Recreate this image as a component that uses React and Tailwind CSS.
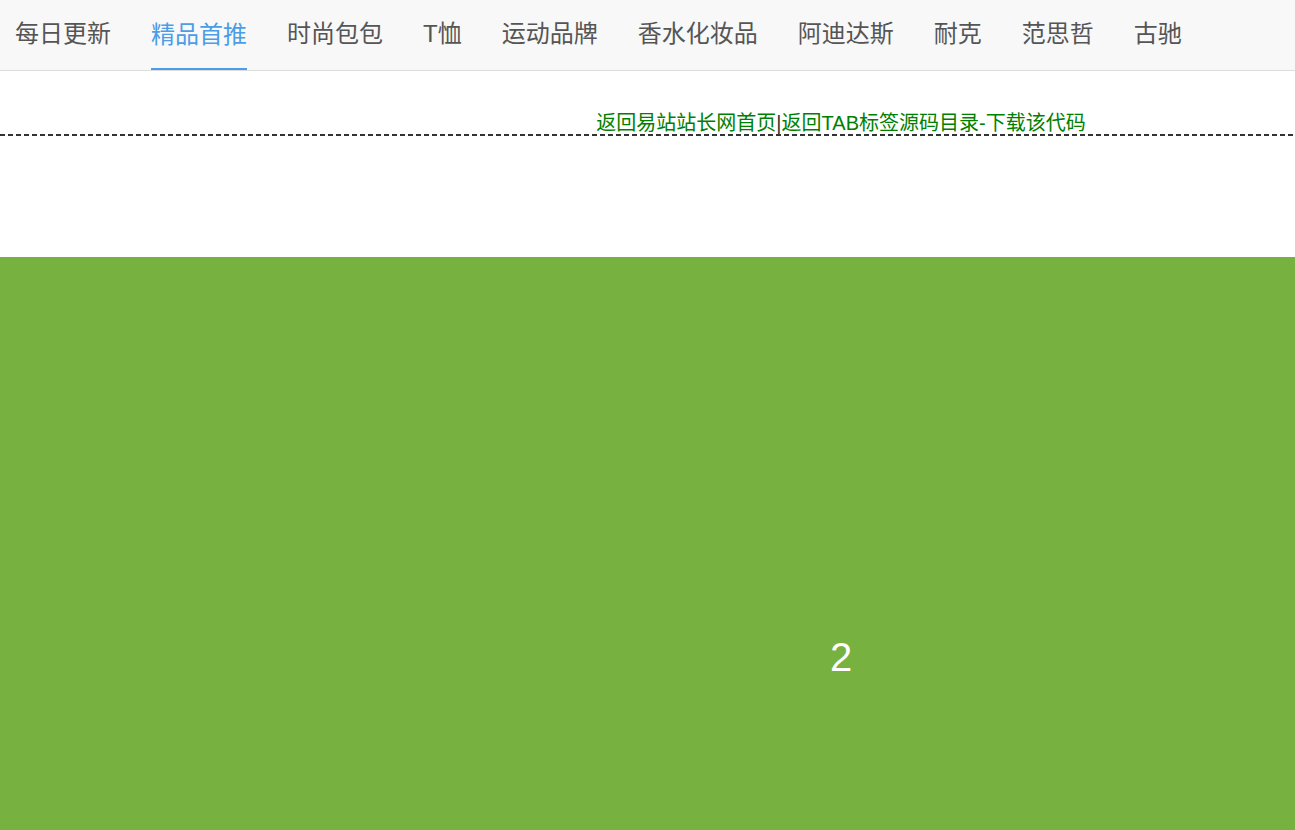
export default function App() {
  const tabs = ["每日更新", "精品首推", "时尚包包", "T恤", "运动品牌", "香水化妆品", "阿迪达斯", "耐克", "范思哲", "古驰"];
  const font = { fontFamily: '"Liberation Sans", "Noto Sans CJK SC", sans-serif' };
  return (
    <div className="h-[830px] w-[1295px] overflow-hidden bg-white" style={font}>
      <div className="box-border flex h-[71px] gap-[40px] border-b border-[#dddddd] bg-[#f8f8f8] pl-[15px]">
        {tabs.map((t, i) => (
          <div
            key={t}
            className={
              i === 1
                ? "box-border flex h-[70px] items-center border-b-2 border-[#4a9de6] pt-[2px] text-[24px] text-[#4a9de6]"
                : "box-border flex h-[70px] items-center pb-[2px] text-[24px] text-[#555555]"
            }
          >
            {t}
          </div>
        ))}
      </div>
      <div className="w-[1682px]">
        <div className="flex h-[63px] items-end justify-center text-[20px] leading-[24px] text-[#008000]">
          <span className="translate-y-[1px]">
            返回易站站长网首页<span className="text-[#333333]">|</span>返回TAB标签源码目录-下载该代码
          </span>
        </div>
        <div className="h-[2px] bg-[repeating-linear-gradient(90deg,#333333_0px,#333333_5px,transparent_5px,transparent_8px)]" />
        <div className="h-[121px]" />
        <div className="flex h-[800px] items-center justify-center bg-[#77b140] text-[40px] text-white">2</div>
      </div>
    </div>
  );
}
